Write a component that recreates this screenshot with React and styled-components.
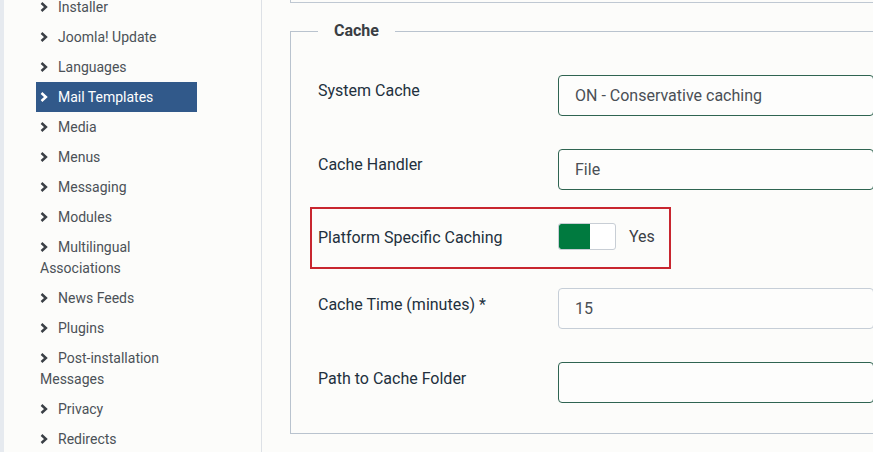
import React from "react";
import styled, { createGlobalStyle } from "styled-components";

const GlobalStyle = createGlobalStyle`
  html, body { margin: 0; padding: 0; }
  body {
    background: #fcfcfa;
    font-family: Roboto, "Liberation Sans", Arial, sans-serif;
    overflow: hidden;
  }
  * { box-sizing: border-box; }
`;

const Layout = styled.div`
  display: flex;
  width: 873px;
  height: 452px;
  overflow: hidden;
  background: #fcfcfa;
`;

const LeftStrip = styled.div`
  width: 4px;
  flex: none;
  background: #e6eaef;
`;

const Sidebar = styled.nav`
  width: 258px;
  flex: none;
  border-right: 1px solid #dde1e6;
  padding-left: 32px;
`;

const MenuList = styled.ul`
  list-style: none;
  margin: -8px 0 0 0;
  padding: 0;
  width: 161px;
`;

const MenuItem = styled.li`
  padding: 4.5px 8px 4.5px 4px;
  font-size: 14px;
  line-height: 21px;
  color: ${(p) => (p.$active ? "#ffffff" : "#4b5157")};
  background: ${(p) => (p.$active ? "#31598a" : "transparent")};
`;

const Chevron = styled.svg`
  display: inline-block;
  width: 8px;
  height: 10px;
  margin-right: 10px;
  vertical-align: -0.5px;
  color: ${(p) => (p.$active ? "#ffffff" : "#3a3f45")};
`;

const Main = styled.main`
  flex: none;
  width: 640px;
  padding-left: 28px;
`;

const PrevFieldsetTail = styled.div`
  height: 3px;
  border-left: 1px solid #bfc8d2;
  border-bottom: 1px solid #bfc8d2;
`;

const Fieldset = styled.fieldset`
  margin: 18px 0 0 0;
  padding: 34px 27px 30px 27px;
  border: 1px solid #b9c3ce;
  min-width: 0;
`;

const Legend = styled.legend`
  padding: 0 16px;
  font-size: 16px;
  line-height: 20px;
  font-weight: 700;
  color: #3a3e43;
`;

const Row = styled.div`
  position: relative;
  display: flex;
  align-items: flex-start;
  margin-bottom: ${(p) => (p.$last ? "0" : "33px")};
  min-height: ${(p) => p.$minHeight || "0"};
`;

const Label = styled.label`
  width: 240px;
  flex: none;
  margin-top: ${(p) => p.$offset || "4.5px"};
  font-size: 16px;
  line-height: 24px;
  color: #22303d;
`;

const Input = styled.div`
  flex: 1;
  height: 41px;
  border: 1px solid ${(p) => (p.$valid ? "#2f6451" : "#c6ced7")};
  border-radius: 4px;
  padding: 0 16px;
  display: flex;
  align-items: center;
  font-size: 16px;
  color: #4a4f55;
  background: #fdfdfc;
`;

const SwitchGroup = styled.div`
  display: flex;
  align-items: center;
  height: 27px;
`;

const Switch = styled.div`
  display: flex;
  width: 58px;
  height: 27px;
  border: 1px solid #c8ced5;
  border-radius: 3px;
  overflow: hidden;
  background: #ffffff;
`;

const SwitchOn = styled.div`
  width: 31px;
  background: #007a3f;
  border-radius: 2px 0 0 2px;
`;

const SwitchText = styled.span`
  margin-left: 13px;
  font-size: 16px;
  line-height: 27px;
  color: #3b4046;
`;

const Highlight = styled.div`
  position: absolute;
  top: -16px;
  left: -8px;
  width: 361px;
  height: 62px;
  border: 2px solid #c8262f;
  pointer-events: none;
`;

const menu = [
  "Installer",
  "Joomla! Update",
  "Languages",
  "Mail Templates",
  "Media",
  "Menus",
  "Messaging",
  "Modules",
  "Multilingual Associations",
  "News Feeds",
  "Plugins",
  "Post-installation Messages",
  "Privacy",
  "Redirects",
];

const ChevronIcon = ({ active }) => (
  <Chevron $active={active} viewBox="0 0 8 10" aria-hidden="true">
    <path
      d="M1.5 1 L5.9 5 L1.5 9"
      fill="none"
      stroke="currentColor"
      strokeWidth="2.5"
      strokeLinejoin="miter"
    />
  </Chevron>
);

export default function App() {
  return (
    <>
      <GlobalStyle />
      <Layout>
        <LeftStrip />
        <Sidebar>
          <MenuList>
            {menu.map((item) => {
              const active = item === "Mail Templates";
              return (
                <MenuItem key={item} $active={active}>
                  <ChevronIcon active={active} />
                  {item}
                </MenuItem>
              );
            })}
          </MenuList>
        </Sidebar>
        <Main>
          <PrevFieldsetTail />
          <Fieldset>
            <Legend>Cache</Legend>
            <Row>
              <Label $offset="3.5px">System Cache</Label>
              <Input $valid>ON - Conservative caching</Input>
            </Row>
            <Row>
              <Label $offset="3.5px">Cache Handler</Label>
              <Input $valid>File</Input>
            </Row>
            <Row $minHeight="32px">
              <Highlight />
              <Label $offset="3px">Platform Specific Caching</Label>
              <SwitchGroup>
                <Switch>
                  <SwitchOn />
                </Switch>
                <SwitchText>Yes</SwitchText>
              </SwitchGroup>
            </Row>
            <Row>
              <Label $offset="5px">Cache Time (minutes) *</Label>
              <Input>15</Input>
            </Row>
            <Row $last>
              <Label $offset="4.5px">Path to Cache Folder</Label>
              <Input $valid></Input>
            </Row>
          </Fieldset>
        </Main>
      </Layout>
    </>
  );
}
